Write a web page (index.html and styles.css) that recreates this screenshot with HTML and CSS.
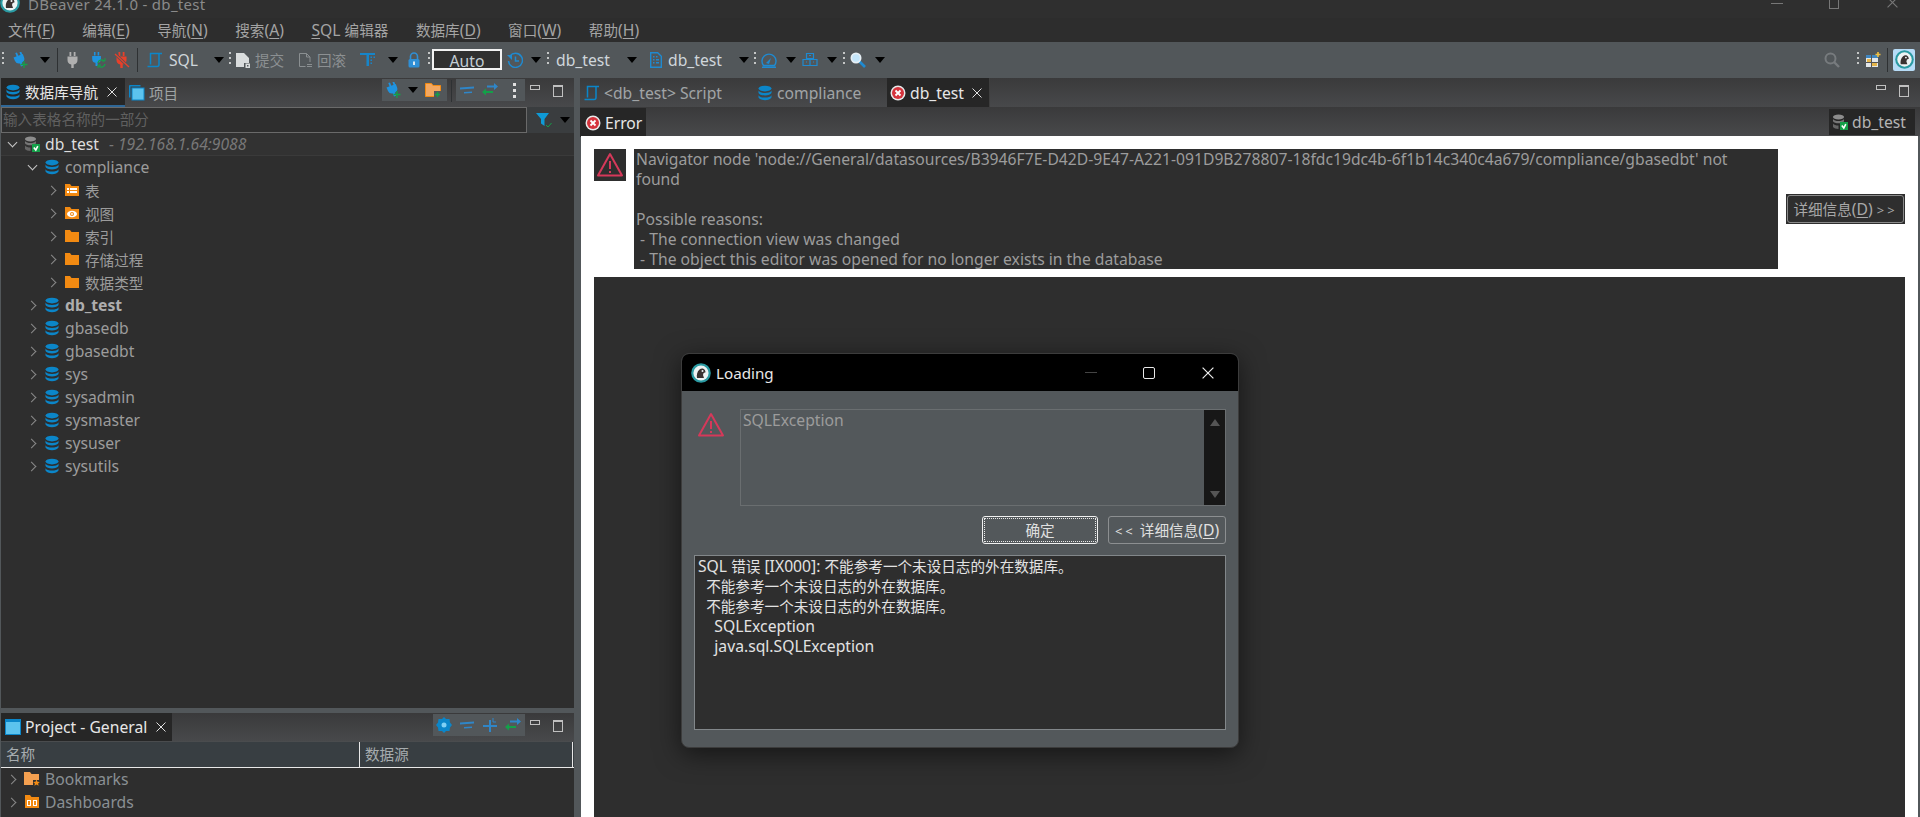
FILE: index.html
```html
<!DOCTYPE html>
<html lang="zh-CN">
<head>
    <meta charset="UTF-8">
    <title>DBeaver 24.1.0 - db_test</title>
    <link rel="stylesheet" href="styles.css">
</head>
<body>

    <!-- shared icons -->
    <svg class="defs" width="0" height="0">
        <symbol id="i-db" viewBox="0 0 16 16">
            <ellipse cx="8" cy="3.600" rx="6.500" ry="2.800" fill="#0b86c9"/>
            <path d="M1.500 5.600C2.500 7.400 5 8 8 8s5.500-.6 6.500-2.400V8c-.8 1.700-3.500 2.400-6.500 2.400S2.300 9.700 1.500 8z" fill="#0b86c9"/>
            <path d="M1.500 10.200c1 1.800 3.500 2.400 6.500 2.400s5.500-.6 6.500-2.400v2.400c-.8 1.700-3.500 2.600-6.500 2.600s-5.700-.9-6.500-2.600z" fill="#0b86c9"/>
        </symbol>
        <symbol id="i-server" viewBox="0 0 16 16">
            <ellipse cx="6.500" cy="3" rx="5.500" ry="2.400" fill="#8d8d8d"/>
            <path d="M1 5c1 1.500 3 2 5.500 2S11 6.500 12 5v2.200c-.8 1.400-3 2-5.500 2S1.800 8.600 1 7.200z" fill="#777"/>
            <path d="M1 9.500c1 1.500 3 2 5.500 2V15c-2.500 0-4.700-.7-5.500-2z" fill="#666"/>
            <rect x="8" y="8" width="8" height="8" fill="#14a049"/>
            <path d="M9.800 11.500l2 2.500 2-3.800" fill="none" stroke="#fff" stroke-width="1.600"/>
        </symbol>
        <symbol id="i-plug" viewBox="0 0 16 16">
            <path d="M4.500 0h1.800v4H4.500zM8.700 0h1.800v4H8.700zM2.500 4.500h10V8a4.500 4.500 0 0 1-3.800 4.400V16H6.300v-3.600A4.500 4.500 0 0 1 2.500 8z" fill="currentColor"/>
        </symbol>
        <symbol id="i-plug-add" viewBox="0 0 16 16">
            <path d="M3.300 1l1.700-.6 1.400 3.700-1.700.7zM7.300-.5L9-.9l1.400 3.700-1.700.6zM1.500 5.500l9.300-3.400 1.300 3.300a4.500 4.500 0 0 1-2.200 5.400l1.100 3-2 .7-1.100-3A4.500 4.500 0 0 1 3 9z" fill="#1f93e0"/>
            <path d="M12 9v7M8.500 12.500h7" stroke="#14a049" stroke-width="1.300"/>
        </symbol>
        <symbol id="i-folder" viewBox="0 0 16 16">
            <path d="M1 2h5l1.500 2H15v10H1z" fill="#f28a12"/>
        </symbol>
        <symbol id="i-folder-table" viewBox="0 0 16 16">
            <path d="M1 2h5l1.500 2H15v10H1z" fill="#f28a12"/>
            <path d="M3 6h2v2H3zM6 6h7v2H6zM3 9h2v2H3zM6 9h7v2H6z" fill="#fff"/>
        </symbol>
        <symbol id="i-folder-eye" viewBox="0 0 16 16">
            <path d="M1 2h5l1.500 2H15v10H1z" fill="#f28a12"/>
            <ellipse cx="8" cy="9" rx="5" ry="3.200" fill="#fff"/>
            <circle cx="8" cy="9" r="2" fill="#f28a12"/>
            <circle cx="8" cy="9" r=".9" fill="#fff"/>
        </symbol>
        <symbol id="i-close" viewBox="0 0 10 10">
            <path d="M.5.500l9 9M9.500.500l-9 9" stroke="currentColor" fill="none"/>
        </symbol>
        <symbol id="i-error" viewBox="0 0 16 16">
            <circle cx="8" cy="8" r="7.500" fill="#e8eaea"/>
            <circle cx="8" cy="8" r="6" fill="#d5333c"/>
            <path d="M5.500 5.500l5 5M10.500 5.500l-5 5" stroke="#fff" stroke-width="1.800"/>
        </symbol>
        <symbol id="i-script" viewBox="0 0 16 16">
            <path d="M3.500 12.500V1.500H15M12 1.500v11a2 2 0 0 1-2 2H.5" fill="none" stroke="#0b86c9" stroke-width="1.500"/>
        </symbol>
        <symbol id="i-warn" viewBox="0 0 28 28">
            <path d="M14 3L26 24.500H2z" fill="none" stroke="#d5395a" stroke-width="2" stroke-linejoin="round"/>
            <path d="M14 10v8M14 20v2" stroke="#d5395a" stroke-width="2"/>
        </symbol>
        <symbol id="i-logo" viewBox="0 0 20 20">
            <circle cx="10" cy="10" r="9.800" fill="#2a9aa2"/>
            <circle cx="10" cy="10" r="7.600" fill="#eef3f3"/>
            <path d="M6 15c-.6-3 .1-6.500 2.500-8.500 2-1.500 4.500-1 5.500.8l.6 2-2 .6-.6 2.200L13 15z" fill="#3a3231"/>
            <circle cx="11.500" cy="8" r="1" fill="#eef3f3"/>
        </symbol>
        <symbol id="i-collapse" viewBox="0 0 16 16">
            <path d="M1 5.500l14-1v2l-14 1zM5 10l8-.6v1.600l-8 .6z" fill="#2f86c8"/>
        </symbol>
        <symbol id="i-link" viewBox="0 0 16 16">
            <path d="M5 3.500h7V1l4 3.500-4 3.500V5.500H5z" fill="#2f86c8"/>
            <path d="M11 9H4V6.500L0 10l4 3.500V11h7z" fill="#14a049"/>
        </symbol>
    </svg>

    <header class="titlebar">
        <svg class="title-logo"><use href="#i-logo"/></svg>
        <span class="title-text">DBeaver 24.1.0 - db_test</span>
        <div class="win-btns">
            <i class="win-min"></i>
            <i class="win-restore"></i>
            <svg class="win-close"><use href="#i-close"/></svg>
        </div>
    </header>

    <nav class="menubar">
        <span><span class="zh">文件</span>(<u>F</u>)</span>
        <span><span class="zh">编辑</span>(<u>E</u>)</span>
        <span><span class="zh">导航</span>(<u>N</u>)</span>
        <span><span class="zh">搜索</span>(<u>A</u>)</span>
        <span><u>S</u>QL <span class="zh">编辑器</span></span>
        <span><span class="zh">数据库</span>(<u>D</u>)</span>
        <span><span class="zh">窗口</span>(<u>W</u>)</span>
        <span><span class="zh">帮助</span>(<u>H</u>)</span>
    </nav>

    <div class="toolbar">
        <i class="grip"></i>
        <svg class="ic m8"><use href="#i-plug-add"/></svg>
        <i class="caret m12"></i>
        <i class="tb-sep m8"></i>
        <svg class="ic plug-grey m7"><use href="#i-plug"/></svg>
        <svg class="ic plug-blue m9" viewBox="0 0 16 16"><use href="#i-plug" width="14" height="14"/><path d="M8 11a3.500 3.500 0 0 1 6-2M15 12a3.500 3.500 0 0 1-6 2" fill="none" stroke="#14a049" stroke-width="1.400"/><path d="M15 6v3h-3M8 16v-3h3" fill="none" stroke="#14a049"/></svg>
        <svg class="ic plug-red m8" viewBox="0 0 16 16"><use href="#i-plug"/><path d="M1 2l14 13" stroke="#52575a" stroke-width="3"/><path d="M1 2l14 13" stroke="#e8402a" stroke-width="1.300"/></svg>
        <i class="tb-sep m7"></i>
        <svg class="ic m9"><use href="#i-script"/></svg>
        <span class="tb-text tb-sql m6">SQL</span>
        <i class="caret"></i>
        <i class="grip m6"></i>
        <svg class="ic m4" viewBox="0 0 16 16"><path d="M1 1h8l5 5v5H9v4H1z" fill="#d9dcdd"/><path d="M10.500 11.500H15V16h-4.500z" fill="#d9dcdd"/><path d="M12 13h1.500v1.500H12z" fill="#52575a"/></svg>
        <span class="tb-text tb-off zh m4">提交</span>
        <svg class="ic m11" viewBox="0 0 16 16"><path d="M2.500 1.500h7l3.500 3.500v5M9.500 1.500V5H13M2.500 1.500v13h6M10 12.500h5M10 14.500h5" fill="none" stroke="#8a8f91"/></svg>
        <span class="tb-text tb-off zh m4">回滚</span>
        <svg class="ic m12" viewBox="0 0 16 16"><path d="M0 1h15v2H9v11H6.500V3H0z" fill="#1685c9"/><path d="M10.500 4.500h1.500V6h-1.500zM10.500 7.500h1.500V9h-1.500zM13.500 4.500H15V6h-1.500zM10.500 10.500h1.500V12h-1.500z" fill="#1685c9"/></svg>
        <i class="caret m12"></i>
        <svg class="ic m9" viewBox="0 0 16 16"><path d="M4.500 7V4.500a3.500 3.500 0 0 1 7 0V7" fill="none" stroke="#2f8fd6" stroke-width="1.600"/><rect x="2.500" y="7" width="11" height="8.500" rx="1.500" fill="#2f8fd6"/><rect x="7" y="9.500" width="2" height="3.500" fill="#dce9f3"/></svg>
        <i class="grip m6"></i>
        <span class="auto-box m2">Auto</span>
        <svg class="ic m5" viewBox="0 0 16 16"><path d="M3 4a7 7 0 1 1-1.500 5" fill="none" stroke="#1f8ad0" stroke-width="1.500"/><path d="M0 3h5v5z" fill="#1f8ad0"/><path d="M8.500 4.500V9H12" fill="none" stroke="#1f8ad0" stroke-width="1.500"/></svg>
        <i class="caret m8"></i>
        <i class="grip m7"></i>
        <span class="tb-text tb-name m7">db_test</span>
        <i class="caret"></i>
        <svg class="ic m12" viewBox="0 0 16 16"><path d="M2.700.700h7l3.600 3.600v11H2.700z" fill="none" stroke="#1f8ad0" stroke-width="1.400"/><path d="M5 4h1.500v1.500H5zM8 4h1.500v1.500H8zM5 7h1.500v1.500H5zM8 7h3v1.500H8zM5 10h1.500v1.500H5zM8 10h3v1.500H8z" fill="#1f8ad0"/></svg>
        <span class="tb-text tb-name m4">db_test</span>
        <i class="caret"></i>
        <i class="grip m6"></i>
        <svg class="ic m5" viewBox="0 0 16 16"><path d="M2.500 13.500a7 7 0 1 1 11 0zM1 15.300h14" fill="none" stroke="#1f8ad0" stroke-width="1.400"/><path d="M5 11l5-5-2 6z" fill="#1f8ad0"/></svg>
        <i class="caret m9"></i>
        <svg class="ic m7" viewBox="0 0 16 16"><path d="M4.500 1.500h7v5h-7zM1 7.500h7v6H1zM8 7.500h7v6H8zM7 3.500h2M4 10h1M11 10h1" fill="none" stroke="#1f8ad0" stroke-width="1.200"/></svg>
        <i class="caret m9"></i>
        <i class="grip m7"></i>
        <svg class="ic m5" viewBox="0 0 16 16"><path d="M9.500 9.500L15 15" stroke="#1f8ad0" stroke-width="2.600"/><circle cx="6" cy="6" r="5.500" fill="#e6eff5"/><circle cx="6" cy="6" r="3.800" fill="#c4e6fb"/></svg>
        <i class="caret m9"></i>
        <div class="spacer"></div>
        <svg class="ic" viewBox="0 0 16 16"><circle cx="6.500" cy="6.500" r="5" fill="none" stroke="#777b7e" stroke-width="2"/><path d="M10 10l5 5" stroke="#777b7e" stroke-width="2.400"/></svg>
        <i class="grip m17"></i>
        <svg class="ic m6" viewBox="0 0 16 16"><rect x="1" y="3" width="12" height="12" fill="#e3e7ea"/><path d="M1 3h12v3H1z" fill="#3f86c0"/><path d="M2 7h4v3H2zM7 11h5v3H7z" fill="#e6b64c"/><path d="M6.500 3v12M1 10.500h12" stroke="#555"/><path d="M13 0v5M10.500 2.500h5" stroke="#f0c040" stroke-width="1.600"/></svg>
        <i class="tb-sep m6"></i>
        <span class="persp-btn m5"><svg class="persp-logo"><use href="#i-logo"/></svg></span>
    </div>

    <div class="workbench">
        <div class="left-col">
            <section class="pane pane-nav">
                <div class="folder-bar">
                    <div class="tab tab-on tab-nav">
                        <svg class="ic"><use href="#i-db"/></svg>
                        <span class="zh">数据库导航</span>
                        <svg class="x"><use href="#i-close"/></svg>
                    </div>
                    <div class="tab tab-off">
                        <svg class="ic" viewBox="0 0 16 16"><path d="M.500.500h11M.500.500v12" stroke="#0b86c9" stroke-width="2" fill="none"/><rect x="3" y="3" width="12" height="12" fill="#5cc3ee" stroke="#0b86c9"/></svg>
                        <span class="zh">项目</span>
                    </div>
                    <div class="spacer"></div>
                    <div class="view-tools tools-a">
                        <svg class="ic"><use href="#i-plug-add"/></svg>
                        <i class="caret"></i>
                        <svg class="ic" viewBox="0 0 16 16"><path d="M.5 1.500h6l1.500 2h7.500v11H.5z" fill="#f4a860" stroke="#f28a12"/><path d="M9 9h7v7H9z" fill="#52575a"/><path d="M12.500 10v5M10 12.500h5" stroke="#14a049" stroke-width="1.500"/></svg>
                    </div>
                    <i class="tb-sep view-sep"></i>
                    <div class="view-tools tools-b">
                        <svg class="ic"><use href="#i-collapse"/></svg>
                        <svg class="ic"><use href="#i-link"/></svg>
                        <i class="kebab"></i>
                    </div>
                    <i class="btn-min"></i>
                    <i class="btn-max"></i>
                </div>
                <div class="filter-row">
                    <div class="filter-input zh">输入表格名称的一部分</div>
                    <svg class="ic filter-ic" viewBox="0 0 16 16"><path d="M0 1h13L8.500 7v7L5 11.500V7z" fill="#0f9ad6"/><path d="M10 13l2 2 3.500-4" fill="none" stroke="#14a049"/></svg>
                    <i class="caret filter-caret"></i>
                </div>
                <div class="tree">
                    <div class="row row-root lv0"><b class="tw open"></b><svg class="ic"><use href="#i-server"/></svg><span class="root-name">db_test</span><em class="root-host">- 192.168.1.64:9088</em></div>
                    <div class="row lv1"><b class="tw open"></b><svg class="ic"><use href="#i-db"/></svg><span>compliance</span></div>
                    <div class="row lv2"><b class="tw"></b><svg class="ic"><use href="#i-folder-table"/></svg><span class="zh">表</span></div>
                    <div class="row lv2"><b class="tw"></b><svg class="ic"><use href="#i-folder-eye"/></svg><span class="zh">视图</span></div>
                    <div class="row lv2"><b class="tw"></b><svg class="ic"><use href="#i-folder"/></svg><span class="zh">索引</span></div>
                    <div class="row lv2"><b class="tw"></b><svg class="ic"><use href="#i-folder"/></svg><span class="zh">存储过程</span></div>
                    <div class="row lv2"><b class="tw"></b><svg class="ic"><use href="#i-folder"/></svg><span class="zh">数据类型</span></div>
                    <div class="row lv1"><b class="tw"></b><svg class="ic"><use href="#i-db"/></svg><span class="bold">db_test</span></div>
                    <div class="row lv1"><b class="tw"></b><svg class="ic"><use href="#i-db"/></svg><span>gbasedb</span></div>
                    <div class="row lv1"><b class="tw"></b><svg class="ic"><use href="#i-db"/></svg><span>gbasedbt</span></div>
                    <div class="row lv1"><b class="tw"></b><svg class="ic"><use href="#i-db"/></svg><span>sys</span></div>
                    <div class="row lv1"><b class="tw"></b><svg class="ic"><use href="#i-db"/></svg><span>sysadmin</span></div>
                    <div class="row lv1"><b class="tw"></b><svg class="ic"><use href="#i-db"/></svg><span>sysmaster</span></div>
                    <div class="row lv1"><b class="tw"></b><svg class="ic"><use href="#i-db"/></svg><span>sysuser</span></div>
                    <div class="row lv1"><b class="tw"></b><svg class="ic"><use href="#i-db"/></svg><span>sysutils</span></div>
                </div>
            </section>

            <section class="pane pane-project">
                <div class="folder-bar">
                    <div class="tab tab-on tab-project">
                        <svg class="ic" viewBox="0 0 16 16"><rect x=".500" y=".500" width="15" height="15" fill="#5cc3ee" stroke="#0b86c9"/><path d="M1 1h14v2H1z" fill="#0b86c9"/></svg>
                        <span>Project - General</span>
                        <svg class="x"><use href="#i-close"/></svg>
                    </div>
                    <div class="spacer"></div>
                    <div class="view-tools tools-c">
                        <svg class="ic" viewBox="0 0 16 16"><path d="M8 0l2 2h3.500L14 5.500 16 8l-2 2.500-.5 3.500H10l-2 2-2-2H2.500L2 10.500 0 8l2-2.500L2.500 2H6z" fill="#0b86c9"/><circle cx="8" cy="8" r="2.500" fill="#7fd0f5"/></svg>
                        <svg class="ic"><use href="#i-collapse"/></svg>
                        <svg class="ic" viewBox="0 0 16 16"><path d="M7 3h2v5h6v2H9v5H7v-5H1V8h6z" fill="#2f86c8"/><path d="M11 1v4h3" fill="none" stroke="#2f86c8"/></svg>
                        <svg class="ic"><use href="#i-link"/></svg>
                    </div>
                    <i class="btn-min"></i>
                    <i class="btn-max"></i>
                </div>
                <div class="grid-head">
                    <span class="col-name zh">名称</span>
                    <span class="col-src zh">数据源</span>
                </div>
                <div class="row lv-p"><b class="tw"></b><svg class="ic" viewBox="0 0 16 16"><path d="M0 1h6l1.500 2H15v6H9v5H0z" fill="#f4a050"/><path d="M12.500 8.500l1 2.200 2.300.2-1.700 1.600.5 2.300-2.100-1.200-2.100 1.200.5-2.300-1.700-1.600 2.300-.2z" fill="#f28a12"/></svg><span>Bookmarks</span></div>
                <div class="row lv-p"><b class="tw"></b><svg class="ic" viewBox="0 0 16 16"><path d="M1 1h5l1.500 2H15v11H1z" fill="#f28a12"/><path d="M3 6h4v6H3zM9 6h4v6H9z" fill="#fff"/><path d="M4 7h2v4H4zM10 7h2v4h-2z" fill="#f28a12"/></svg><span>Dashboards</span></div>
            </section>
        </div>

        <div class="sash"></div>

        <div class="right-col">
            <div class="editor-tabs">
                <div class="tab tab-off tab-script">
                    <svg class="ic"><use href="#i-script"/></svg>
                    <span>&lt;db_test&gt; Script</span>
                </div>
                <div class="tab tab-off tab-compl">
                    <svg class="ic"><use href="#i-db"/></svg>
                    <span>compliance</span>
                </div>
                <div class="tab tab-on tab-err">
                    <svg class="ic"><use href="#i-error"/></svg>
                    <span>db_test</span>
                    <svg class="x"><use href="#i-close"/></svg>
                </div>
                <div class="spacer"></div>
                <i class="btn-min"></i>
                <i class="btn-max"></i>
            </div>
            <div class="sub-tabs">
                <div class="tab tab-on tab-error">
                    <svg class="ic"><use href="#i-error"/></svg>
                    <span>Error</span>
                </div>
                <div class="spacer"></div>
                <div class="tab tab-on tab-conn">
                    <svg class="ic"><use href="#i-server"/></svg>
                    <span>db_test</span>
                </div>
            </div>
            <div class="error-page">
                <div class="error-head">
                    <div class="error-icon"><svg class="warn-ic"><use href="#i-warn"/></svg></div>
                    <p class="error-msg">Navigator node 'node://General/datasources/B3946F7E-D42D-9E47-A221-091D9B278807-18fdc19dc4b-6f1b14c340c4a679/compliance/gbasedbt' not<br>found<br><br>Possible reasons:<br>&nbsp;- The connection view was changed<br>&nbsp;- The object this editor was opened for no longer exists in the database</p>
                    <div class="details-wrap"><button class="details-btn"><span class="zh">详细信息</span>(<u>D</u>) <span class="chev">&gt;&gt;</span></button></div>
                </div>
                <div class="error-body"></div>
            </div>
        </div>
    </div>

    <!-- error dialog -->
    <div class="dialog">
        <div class="dlg-title">
            <svg class="dlg-logo"><use href="#i-logo"/></svg>
            <span>Loading</span>
            <div class="spacer"></div>
            <i class="dlg-min"></i>
            <i class="dlg-max"></i>
            <svg class="dlg-close"><use href="#i-close"/></svg>
        </div>
        <div class="dlg-body">
            <div class="dlg-top">
                <svg class="dlg-warn"><use href="#i-warn"/></svg>
                <div class="dlg-msg">
                    <span>SQLException</span>
                    <div class="dlg-scroll"><i class="sc-up"></i><i class="sc-down"></i></div>
                </div>
            </div>
            <div class="dlg-btns">
                <button class="dlg-btn dlg-ok"><span class="zh">确定</span></button>
                <button class="dlg-btn dlg-more"><span class="chev">&lt;&lt;</span> <span class="zh">详细信息</span>(<u>D</u>)</button>
            </div>
            <div class="dlg-detail">SQL <span class="zh">错误</span> [IX000]: <span class="zh">不能参考一个未设日志的外在数据库。</span><br>&nbsp;&nbsp;<span class="zh">不能参考一个未设日志的外在数据库。</span><br>&nbsp;&nbsp;<span class="zh">不能参考一个未设日志的外在数据库。</span><br>&nbsp;&nbsp;&nbsp;&nbsp;SQLException<br>&nbsp;&nbsp;&nbsp;&nbsp;java.sql.SQLException</div>
        </div>
    </div>

</body>
</html>
```

FILE: styles.css
```css
* {
    margin: 0;
    padding: 0;
    box-sizing: border-box;
}
html, body {
    height: 100%;
}
body {
    font-family: "Noto Sans", "Noto Sans CJK SC", sans-serif;
    font-size: 15.7px; /* latin text runs wide in the original */
    background: #2e2e2e;
    color: #9c9c9c;
    display: flex;
    flex-direction: column;
    overflow: hidden;
}
.zh {
    font-size: 14.6px;
}
i {
    display: block;
    flex: none;
}
u {
    text-underline-offset: 2px;
}
.defs {
    position: absolute;
}
.spacer {
    flex: 1;
}
.ic {
    width: 16px;
    height: 16px;
    flex: none;
}

/* margins used in the toolbar */
.m2 { margin-left: 2px; }
.m4 { margin-left: 4px; }
.m5 { margin-left: 5px; }
.m6 { margin-left: 6px; }
.m7 { margin-left: 7px; }
.m8 { margin-left: 8px; }
.m9 { margin-left: 9px; }
.m11 { margin-left: 11px; }
.m12 { margin-left: 12px; }
.m17 { margin-left: 17px; }

/* title + menu */
.titlebar {
    height: 18px;
    flex: none;
    background: #2f2f2f;
    display: flex;
    align-items: flex-end;
    overflow: hidden;
    color: #8a8a8a;
    font-size: 15px;
}
.title-logo {
    width: 20px;
    height: 20px;
    flex: none;
    margin-bottom: 5px;
}
.title-text {
    margin-left: 8px;
    line-height: 20px;
    margin-bottom: 4px;
    letter-spacing: .3px;
}
.win-btns {
    margin-left: auto;
    width: 149px;
    height: 18px;
    display: flex;
}
.win-min {
    width: 12px;
    height: 1px;
    background: #777;
    margin-top: 3px;
}
.win-restore {
    width: 10px;
    height: 10px;
    border: 1px solid #777;
    margin: -1px 0 0 46px;
}
.win-close {
    width: 11px;
    height: 11px;
    color: #777;
    margin: -3px 0 0 48px;
}
.menubar {
    height: 24px;
    flex: none;
    background: #2d2d2d;
    display: flex;
    align-items: center;
    gap: 27.5px;
    padding-left: 8px;
    color: #a4a4a4;
    white-space: nowrap;
}

/* main toolbar */
.toolbar {
    height: 35px;
    flex: none;
    background: #52575a;
    display: flex;
    align-items: center;
    padding: 0 5px 0 2px;
    color: #cfd6da;
}
.grip {
    width: 2px;
    height: 15px;
    background: repeating-linear-gradient(#c4c6c6 0 2px, transparent 2px 5px);
}
.tb-sep {
    width: 1px;
    height: 24px;
    background: #2e3133;
}
.caret {
    width: 0;
    height: 0;
    margin-right: -1px;
    border-left: 5px solid transparent;
    border-right: 5px solid transparent;
    border-top: 6px solid #000;
}
.plug-blue { color: #1f93e0; }
.plug-grey { color: #b0b0b0; }
.plug-red { color: #e8402a; }
.tb-text {
    line-height: 20px;
    white-space: nowrap;
}
.tb-sql {
    width: 45px;
}
.tb-off {
    color: #8c9092;
    width: 31px;
}
.tb-name {
    width: 71px;
}
.auto-box {
    width: 70px;
    height: 21px;
    background: #303030;
    border: 2px solid #f2f2f2;
    text-align: center;
    line-height: 19px;
    padding-top: 1px;
    color: #c4ced4;
}
.persp-btn {
    width: 22px;
    height: 22px;
    background: #b7dcf7;
    border-radius: 2px;
    display: flex;
    align-items: center;
    justify-content: center;
}
.persp-logo {
    width: 19px;
    height: 19px;
}

/* panes */
.workbench {
    flex: 1;
    min-height: 0;
    display: flex;
    padding-top: 1px;
    background: #52575a;
}
.left-col {
    width: 574px;
    flex: none;
    display: flex;
    flex-direction: column;
    padding-left: 1px;
    gap: 5px;
}
.pane {
    background: #2e2e2e;
    display: flex;
    flex-direction: column;
    overflow: hidden;
}
.pane-nav {
    height: 630px;
    flex: none;
}
.pane-project {
    flex: 1;
}
.sash {
    width: 6px;
    flex: none;
}
.right-col {
    flex: 1;
    min-width: 0;
    display: flex;
    flex-direction: column;
}
.folder-bar, .editor-tabs, .sub-tabs {
    height: 29px;
    flex: none;
    display: flex;
    background: linear-gradient(#3a3a3b, #48494b);
}
.tab {
    display: flex;
    align-items: center;
    flex: none;
    height: 100%;
    white-space: nowrap;
}
.tab-on {
    background: #262626;
    color: #e6e6e6;
}
.tab-off {
    color: #a0a4a6;
}
.x {
    width: 10px;
    height: 10px;
    color: #e0e0e0;
    flex: none;
}
.tab-nav {
    width: 124px;
    padding-left: 4px;
    gap: 4px;
    border-bottom: 2px solid #2f6797;
}
.tab-nav .x {
    margin-left: 5px;
}
.tab-off .ic + span, .tab-err .ic + span, .tab-error .ic + span, .tab-conn .ic + span, .tab-project .ic + span {
    margin-left: 4px;
}
.pane-nav .tab-off {
    padding-left: 4px;
}
.view-tools {
    height: 22px;
    margin-top: 1px;
    background: #52575a;
    display: flex;
    align-items: center;
}
.tools-a {
    width: 65px;
    padding-left: 3px;
}
.tools-a .caret {
    margin: 0 7px;
}
.view-sep {
    margin: 2px 4px 0;
    height: 22px;
}
.tools-b {
    width: 69px;
    padding-left: 3px;
    gap: 7px;
}
.tools-c {
    width: 92px;
    padding-left: 3px;
    gap: 7px;
}
.kebab {
    width: 3px;
    height: 15px;
    margin-left: 8px;
    background: repeating-linear-gradient(#e0e0e0 0 3px, transparent 3px 6px);
}
.btn-min {
    width: 10px;
    height: 5px;
    border: 1px solid #c0c0c0;
    margin: 7px 0 0 5px;
}
.btn-max {
    width: 10px;
    height: 12px;
    border: 1px solid #c0c0c0;
    border-top-width: 2px;
    margin: 7px 11px 0 13px;
}
.filter-row {
    height: 26px;
    flex: none;
    display: flex;
    align-items: center;
    background: #3a3d3f;
}
.filter-input {
    width: 526px;
    height: 26px;
    background: #2e2e2e;
    border: 1px solid #6a6a6a;
    line-height: 23px;
    padding-left: 1px;
    color: #606060;
}
.filter-ic {
    margin-left: 9px;
}
.filter-caret {
    margin-left: 8px;
}

/* tree */
.row {
    height: 23px;
    flex: none;
    display: flex;
    align-items: center;
    padding-bottom: 1px;
    white-space: nowrap;
}
.row .ic {
    margin-left: 6px;
}
.row .ic + span {
    margin-left: 5px;
}
.tw {
    width: 12px;
    height: 12px;
    flex: none;
    position: relative;
}
.tw::before {
    content: "";
    position: absolute;
    left: 2px;
    top: 3px;
    width: 6px;
    height: 6px;
    border-top: 1.5px solid #8a8a8a;
    border-right: 1.5px solid #8a8a8a;
    transform: rotate(45deg);
}
.tw.open::before {
    left: 3px;
    top: 1px;
    border-color: #c8c8c8;
    transform: rotate(135deg);
}
.lv0 { padding-left: 5px; }
.lv1 { padding-left: 25px; }
.lv2 { padding-left: 45px; }
.lv-p { padding-left: 5px; }
.row-root {
    background: #323232;
    border-bottom: 1px solid #3a3a3a;
    padding-bottom: 0;
}
.root-name {
    color: #dedede;
}
.root-host {
    margin-left: 10px;
    color: #787878;
}
.bold {
    font-weight: 700;
    color: #aeaeae;
}

/* project view */
.tab-project {
    width: 171px;
    padding-left: 4px;
}
.tab-project .x {
    margin-left: 9px;
}
.pane-project .folder-bar {
    border-bottom: 1px solid #4a4c4e;
}
.grid-head {
    height: 26px;
    flex: none;
    display: flex;
    background: #383e42;
    border-bottom: 1px solid #e8e8e8;
    color: #a6acaf;
    line-height: 24px;
}
.col-name {
    width: 359px;
    padding-left: 5px;
    border-right: 1px solid #e8e8e8;
}
.col-src {
    width: 213px;
    padding-left: 5px;
    border-right: 1px solid #e8e8e8;
}
.pane-project .row {
    color: #8a9094;
}

/* editor */
.tab-script {
    padding-left: 4px;
    width: 177px;
}
.tab-compl {
    width: 130px;
}
.tab-err {
    width: 103px;
    padding-left: 3px;
    border-right: 1px solid #3e3e3e;
}
.tab-err .x {
    margin-left: 8px;
}
.editor-tabs .btn-min {
    margin-left: 0;
}
.tab-error {
    width: 66px;
    padding-left: 5px;
    margin-top: 1px;
}
.sub-tabs .tab-conn {
    width: 86px;
    height: 26px;
    padding-left: 3px;
    margin: 2px 5px 0 0;
    color: #b4b4b4;
}
.error-page {
    flex: 1;
    min-height: 0;
    margin-left: 1px;
    margin-right: 2px;
    background: #fff;
    padding: 13px 13px 0;
    display: flex;
    flex-direction: column;
    gap: 8px;
}
.error-head {
    display: flex;
    gap: 8px;
    height: 120px;
    flex: none;
}
.error-icon {
    width: 32px;
    height: 32px;
    background: #2e2e2e;
    display: flex;
    align-items: center;
    justify-content: center;
    flex: none;
}
.warn-ic {
    width: 28px;
    height: 28px;
}
.error-msg {
    width: 1144px;
    flex: none;
    background: #2e2e2e;
    color: #9c9c9c;
    padding-left: 2px;
    line-height: 20px;
    white-space: nowrap;
}
.details-wrap {
    width: 119px;
    height: 30px;
    align-self: center;
    background: #2e2e2e;
    padding: 1px;
}
.details-btn {
    width: 100%;
    height: 100%;
    background: #2e2e2e;
    border: 1px solid #8a8a8a;
    border-radius: 3px;
    color: #a8a8a8;
    font: inherit;
    white-space: nowrap;
}
.chev {
    letter-spacing: 3px;
    font-size: 13px;
}
.error-body {
    flex: 1;
    background: #2e2e2e;
}

/* dialog */
.dialog {
    position: absolute;
    left: 681px;
    top: 353px;
    width: 558px;
    height: 395px;
    background: #53585b;
    border: 1px solid #3c3c3c;
    border-radius: 8px;
    box-shadow: 0 6px 26px rgba(0, 0, 0, 0.55);
    overflow: hidden;
    display: flex;
    flex-direction: column;
}
.dlg-title {
    height: 37px;
    flex: none;
    background: #000;
    color: #e8e8e8;
    display: flex;
    align-items: center;
    padding-left: 9px;
    font-size: 15.2px;
}
.dlg-logo {
    width: 20px;
    height: 20px;
    margin-right: 5px;
}
.dlg-min {
    width: 12px;
    height: 1px;
    background: #444;
}
.dlg-max {
    width: 12px;
    height: 12px;
    border: 1.5px solid #e8e8e8;
    border-radius: 2px;
    margin-left: 46px;
}
.dlg-close {
    width: 12px;
    height: 12px;
    color: #e8e8e8;
    margin: 0 24px 0 47px;
}
.dlg-body {
    flex: 1;
    padding: 18px 12px 0;
}
.dlg-top {
    display: flex;
    height: 97px;
    padding-left: 3px;
}
.dlg-warn {
    width: 28px;
    height: 28px;
    margin-top: 2px;
    flex: none;
}
.dlg-msg {
    width: 486px;
    height: 97px;
    margin-left: 15px;
    border: 1px solid #6a6e70;
    display: flex;
    justify-content: space-between;
    line-height: 21px;
    padding-left: 2px;
    color: #9c9c9c;
}
.dlg-scroll {
    width: 21px;
    background: #171717;
    display: flex;
    flex-direction: column;
    justify-content: space-between;
    align-items: center;
    padding: 9px 0 7px;
}
.sc-up, .sc-down {
    width: 0;
    height: 0;
    border-left: 5px solid transparent;
    border-right: 5px solid transparent;
}
.sc-up { border-bottom: 7px solid #555; }
.sc-down { border-top: 7px solid #555; }
.dlg-btns {
    display: flex;
    justify-content: flex-end;
    gap: 10px;
    margin-top: 10px;
}
.dlg-btn {
    height: 28px;
    background: #53585b;
    border: 1px solid #8c8f91;
    border-radius: 3px;
    color: #e0e0e0;
    font: inherit;
    white-space: nowrap;
}
.dlg-ok {
    width: 116px;
    border-color: #f0f0f0;
    padding: 1px;
}
.dlg-ok span {
    display: block;
    height: 100%;
    border: 1px dotted #e8e8e8;
    line-height: 22px;
}
.dlg-more {
    width: 118px;
}
.dlg-detail {
    height: 175px;
    margin-top: 11px;
    background: #2e2e2e;
    border: 1px solid #82878a;
    padding-left: 3px;
    color: #e2e2e2;
    line-height: 20px;
    white-space: nowrap;
}
```
